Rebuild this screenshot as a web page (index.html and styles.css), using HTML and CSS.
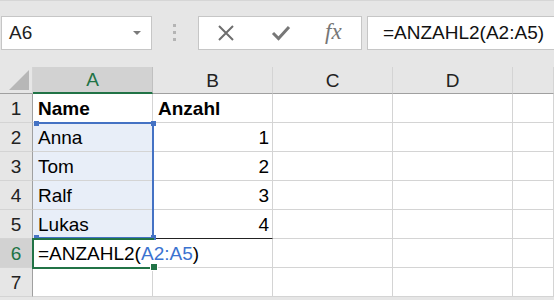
FILE: index.html
```html
<!DOCTYPE html>
<html lang="de">
<head>
  <meta charset="UTF-8" />
  <title>ANZAHL2</title>
  <link rel="stylesheet" href="styles.css">
</head>
<body>
  <div class="toolbar">
    <div class="namebox">
      <span>A6</span>
      <span class="caret"></span>
    </div>
    <div class="grip"><i></i><i></i><i></i></div>
    <div class="fbuttons">
      <svg class="ico" width="18" height="18" viewBox="0 0 18 18"><path d="M2 2 L16 16 M16 2 L2 16" stroke="#6e6e6e" stroke-width="2" fill="none"/></svg>
      <svg class="ico" width="20" height="18" viewBox="0 0 20 18"><path d="M2 9 L7.5 14.5 L18 3" stroke="#777" stroke-width="3" fill="none"/></svg>
      <span class="fx">fx</span>
    </div>
    <div class="formula">=ANZAHL2(A2:A5)</div>
  </div>

  <div class="sheet">
    <div class="corner"><span></span></div>
    <div class="colhead sel">A</div>
    <div class="colhead">B</div>
    <div class="colhead">C</div>
    <div class="colhead">D</div>
    <div class="colhead"></div>

    <div class="rowhead">1</div>
    <div class="cell b">Name</div>
    <div class="cell b">Anzahl</div>
    <div class="cell"></div><div class="cell"></div><div class="cell"></div>

    <div class="rowhead">2</div>
    <div class="cell ref">Anna</div>
    <div class="cell num">1</div>
    <div class="cell"></div><div class="cell"></div><div class="cell"></div>

    <div class="rowhead">3</div>
    <div class="cell ref">Tom</div>
    <div class="cell num">2</div>
    <div class="cell"></div><div class="cell"></div><div class="cell"></div>

    <div class="rowhead">4</div>
    <div class="cell ref">Ralf</div>
    <div class="cell num">3</div>
    <div class="cell"></div><div class="cell"></div><div class="cell"></div>

    <div class="rowhead">5</div>
    <div class="cell ref">Lukas</div>
    <div class="cell num edge">4</div>
    <div class="cell"></div><div class="cell"></div><div class="cell"></div>

    <div class="rowhead sel">6</div>
    <div class="cell editing">=ANZAHL2(<span class="r">A2:A5</span>)</div>
    <div class="cell"></div>
    <div class="cell"></div><div class="cell"></div><div class="cell"></div>

    <div class="rowhead">7</div>
    <div class="cell"></div><div class="cell"></div>
    <div class="cell"></div><div class="cell"></div><div class="cell"></div>

    <!-- reference box A2:A5 -->
    <div class="refbox">
      <i class="h tl"></i><i class="h tr"></i><i class="h bl"></i><i class="h br"></i>
    </div>
    <!-- active cell A6 -->
    <div class="active"><i class="fill"></i></div>
  </div>
</body>
</html>
```

FILE: styles.css
```css
html, body {
  overflow: hidden;
}
body {
  margin: 0;
  background: #e6e6e6;
  font-family: "Liberation Sans", Arial, sans-serif;
  width: 554px;
  height: 300px;
}
.toolbar {
  height: 67px;
  display: flex;
  align-items: flex-start;
  box-sizing: border-box;
  border-top: 1px solid #d6d6d6;
  padding-top: 15px;
}
.namebox {
  margin-left: 1px;
  width: 151px;
  height: 34px;
  box-sizing: border-box;
  background: #fff;
  border: 1px solid #c6c6c6;
  display: flex;
  align-items: center;
  justify-content: space-between;
  padding: 0 10px 0 7px;
  font-size: 19px;
  color: #222;
}
.caret {
  width: 0;
  height: 0;
  border-left: 4px solid transparent;
  border-right: 4px solid transparent;
  border-top: 4px solid #7a7a7a;
}
.grip {
  width: 44px;
  display: flex;
  flex-direction: column;
  align-items: center;
  gap: 4px;
  padding-top: 8px;
}
.grip i {
  width: 3px;
  height: 3px;
  background: #b4b4b4;
}
.fbuttons {
  margin-left: 2px;
  width: 164px;
  height: 34px;
  box-sizing: border-box;
  background: #fff;
  border: 1px solid #c6c6c6;
  display: flex;
  align-items: center;
  padding-left: 18px;
  gap: 36px;
}
.fx {
  font-family: "Liberation Serif", serif;
  font-style: italic;
  font-size: 23px;
  color: #767676;
  margin-left: -2px;
  margin-top: -3px;
}
.formula {
  margin-left: 5px;
  flex: 1;
  height: 34px;
  box-sizing: border-box;
  background: #fff;
  border: 1px solid #c6c6c6;
  border-right: none;
  padding-left: 15px;
  line-height: 32px;
  font-size: 19px;
  color: #111;
}

.sheet {
  position: relative;
  display: grid;
  grid-template-columns: 33px 120px 120px 120px 120px 1fr;
  grid-template-rows: 27px repeat(7, 29px);
  background: #fff;
}
.corner {
  background: #e6e6e6;
  border-bottom: 1px solid #a0a0a0;
  border-right: 1px solid #d4d4d4;
  position: relative;
}
.corner span {
  position: absolute;
  right: 3px;
  bottom: 3px;
  width: 0;
  height: 0;
  border-left: 20px solid transparent;
  border-bottom: 20px solid #b7b7b7;
}
.colhead {
  background: #e6e6e6;
  border-bottom: 1px solid #a0a0a0;
  border-right: 1px solid #d4d4d4;
  font-size: 19px;
  color: #222;
  text-align: center;
  line-height: 27px;
}
.colhead.sel {
  background: #d2d2d2;
  color: #217346;
  border-bottom: 2px solid #217346;
  border-right-color: #c0c0c0;
  line-height: 26px;
}
.rowhead {
  background: #e6e6e6;
  border-bottom: 1px solid #d4d4d4;
  border-right: 1px solid #a0a0a0;
  font-size: 19px;
  color: #222;
  text-align: center;
  line-height: 29px;
}
.rowhead.sel {
  background: #d2d2d2;
  color: #217346;
}
.cell {
  border-right: 1px solid #d4d4d4;
  border-bottom: 1px solid #d4d4d4;
  padding: 0 3px 0 5px;
  font-size: 19px;
  line-height: 30px;
  color: #000;
  white-space: nowrap;
}
.cell.b {
  font-weight: bold;
}
.cell.num {
  text-align: right;
}
.cell.ref {
  background: #e8eef8;
}
.cell.edge {
  border-bottom-color: #222;
}
.cell.editing {
  border-right-color: transparent;
  overflow: visible;
  position: relative;
  z-index: 1;
}
.cell .r {
  color: #3b73d0;
}
.refbox {
  position: absolute;
  left: 34px;
  top: 55px;
  width: 120px;
  height: 117px;
  box-sizing: border-box;
  border: 2px solid #4472c4;
  border-left: none;
  pointer-events: none;
}
.refbox .h {
  position: absolute;
  width: 5px;
  height: 5px;
  background: #4472c4;
}
.refbox .tl { left: 0; top: -3px; }
.refbox .tr { right: -4px; top: -3px; }
.refbox .bl { left: 0; bottom: -3px; }
.refbox .br { right: -4px; bottom: -3px; }
.active {
  position: absolute;
  left: 32px;
  top: 171px;
  width: 122px;
  height: 31px;
  box-sizing: border-box;
  border: 2px solid #217346;
  border-right: none;
  z-index: 2;
}
.active .fill {
  position: absolute;
  right: -4px;
  bottom: -4px;
  width: 6px;
  height: 6px;
  background: #217346;
  border: 1px solid #fff;
}
```
